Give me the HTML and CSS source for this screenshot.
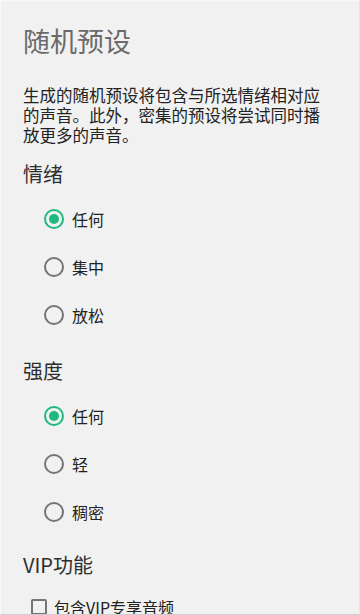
FILE: index.html
```html
<!DOCTYPE html>
<html lang="zh-CN">
<head>
<meta charset="utf-8">
<title>随机预设</title>
<link rel="stylesheet" href="styles.css">
</head>
<body>
<div class="dialog">
  <h1 class="title">随机预设</h1>
  <p class="desc">生成的随机预设将包含与所选情绪相对应的声音。此外，密集的预设将尝试同时播放更多的声音。</p>

  <h2 class="heading">情绪</h2>
  <div class="group">
    <label class="radio checked"><span class="circle"></span><span class="label">任何</span></label>
    <label class="radio"><span class="circle"></span><span class="label">集中</span></label>
    <label class="radio"><span class="circle"></span><span class="label">放松</span></label>
  </div>

  <h2 class="heading">强度</h2>
  <div class="group">
    <label class="radio checked"><span class="circle"></span><span class="label">任何</span></label>
    <label class="radio"><span class="circle"></span><span class="label">轻</span></label>
    <label class="radio"><span class="circle"></span><span class="label">稠密</span></label>
  </div>

  <h2 class="heading vip">VIP功能</h2>
  <label class="check"><span class="box"></span><span class="label">包含VIP专享音频</span></label>
</div>
</body>
</html>
```
FILE: styles.css
```css
html, body {
  margin: 0;
  padding: 0;
  background: #f1f1f1;
}
body {
  font-family: "Noto Sans CJK SC", "Noto Sans", sans-serif;
  width: 360px;
  height: 615px;
  overflow: hidden;
}
.dialog {
  box-sizing: border-box;
  width: 360px;
  height: 615px;
  overflow: hidden;
  padding: 0 30px 0 23px;
  border-left: 1px solid #fafafa;
  border-top: 1px solid #f8f8f8;
  border-right: 1px solid #e6e6e6;
  border-bottom: 1px solid #cfcfcf;
  display: flex;
  flex-direction: column;
}
.title {
  margin: 24px 0 0 -1px;
  font-size: 27px;
  line-height: 32px;
  font-weight: 400;
  color: #6a6a6a;
}
.desc {
  margin: 28px 0 0 -1px;
  font-size: 16.5px;
  line-height: 20px;
  color: #222;
}
.heading {
  margin: 15px 0 0 -1px;
  font-size: 20px;
  line-height: 28px;
  font-weight: 400;
  color: #2e2e2e;
}
.group {
  margin-top: 7px;
  margin-bottom: 2px;
  display: flex;
  flex-direction: column;
}
.group + .heading {
  margin-top: 16px;
}
.group + .heading.vip {
  margin-top: 13px;
}
.radio {
  height: 48px;
  display: flex;
  align-items: center;
  padding-left: 20px;
}
.circle {
  box-sizing: border-box;
  width: 20px;
  height: 20px;
  border: 2px solid #757575;
  border-radius: 50%;
  display: flex;
  align-items: center;
  justify-content: center;
}
.radio.checked .circle {
  border-color: #1fb97f;
}
.radio.checked .circle::after {
  content: "";
  width: 10px;
  height: 10px;
  border-radius: 50%;
  background: #1fb97f;
}
.label {
  margin-left: 8px;
  font-size: 16px;
  color: #222;
  line-height: 20px;
}
.check {
  margin-top: 18px;
  display: flex;
  align-items: center;
  padding-left: 7px;
}
.box {
  box-sizing: border-box;
  width: 16px;
  height: 16px;
  border: 2px solid #757575;
  border-radius: 2px;
}
.check .label {
  margin-left: 7px;
}
```
